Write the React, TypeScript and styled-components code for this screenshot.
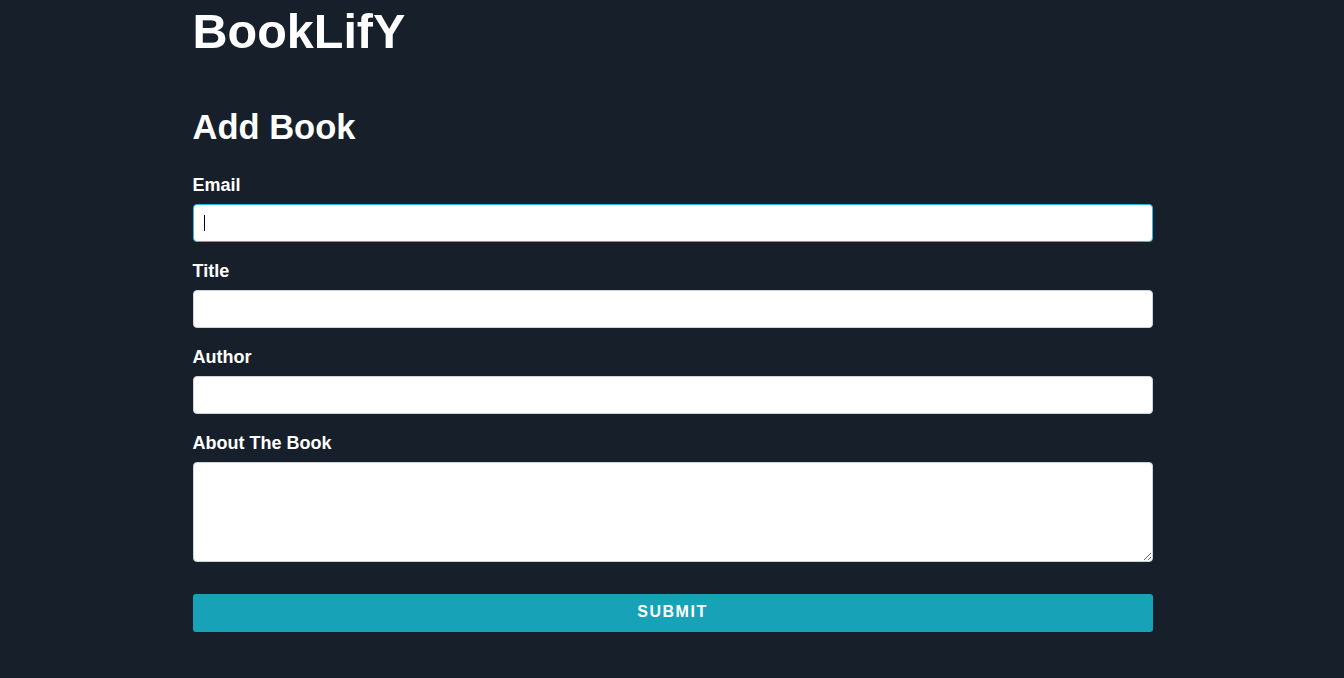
import styled, { createGlobalStyle } from 'styled-components';

const GlobalStyle = createGlobalStyle`
  html, body {
    margin: 0;
    padding: 0;
    background: #17202a;
  }
  body {
    font-family: "Liberation Sans", Arial, sans-serif;
    color: #ffffff;
  }
`;

type Field = {
  label: string;
  multiline?: boolean;
  focused?: boolean;
};

const fields: Field[] = [
  { label: 'Email', focused: true },
  { label: 'Title' },
  { label: 'Author' },
  { label: 'About The Book', multiline: true },
];

export default function App() {
  return (
    <>
      <GlobalStyle />
      <Page>
        <Brand>BookLifY</Brand>
        <Heading>Add Book</Heading>
        <Form onSubmit={(e) => e.preventDefault()}>
          {fields.map((f) => (
            <FieldGroup key={f.label}>
              <Label>{f.label}</Label>
              {f.multiline ? (
                <TextArea />
              ) : (
                <InputWrap>
                  <Input $focused={f.focused} />
                  {f.focused && <Caret />}
                </InputWrap>
              )}
            </FieldGroup>
          ))}
          <SubmitButton type="submit">Submit</SubmitButton>
        </Form>
      </Page>
    </>
  );
}

// ============================
//  Styled Components
// ============================

const Page = styled.div`
  width: 960px;
  margin: 0 auto;
  padding: 3px 0 46px 1px;
  display: flex;
  flex-direction: column;
`;

const Brand = styled.h1`
  margin: 0;
  font-size: 48.5px;
  line-height: 56px;
  font-weight: 700;
`;

const Heading = styled.h2`
  margin: 48px 0 0;
  font-size: 34.5px;
  line-height: 40px;
  font-weight: 700;
`;

const Form = styled.form`
  margin-top: 27px;
  display: flex;
  flex-direction: column;
`;

const FieldGroup = styled.div`
  display: flex;
  flex-direction: column;
  gap: 8px;
  margin-bottom: 18px;

  &:nth-last-of-type(1) {
    margin-bottom: 32px;
  }
`;

const Label = styled.label`
  font-size: 18px;
  line-height: 22px;
  font-weight: 700;
`;

const InputWrap = styled.div`
  position: relative;
  display: flex;
`;

const Input = styled.input<{ $focused?: boolean }>`
  box-sizing: border-box;
  width: 100%;
  height: 38px;
  padding: 0 10px;
  border-radius: 4px;
  border: 1px solid ${({ $focused }) => ($focused ? '#2bb7ea' : '#ced4da')};
  background: #ffffff;
  font-family: "Liberation Sans", Arial, sans-serif;
  font-size: 16px;
  outline: none;
`;

const Caret = styled.span`
  position: absolute;
  left: 11px;
  top: 11px;
  width: 1px;
  height: 16px;
  background: #000000;
`;

const TextArea = styled.textarea`
  box-sizing: border-box;
  width: 100%;
  height: 100px;
  padding: 8px 10px;
  border-radius: 4px;
  border: 1px solid #ced4da;
  background: #ffffff;
  font-family: "Liberation Sans", Arial, sans-serif;
  font-size: 16px;
  outline: none;
  display: block;
`;

const SubmitButton = styled.button`
  height: 38px;
  width: 100%;
  padding: 0 0 3px;
  border: none;
  border-radius: 3px;
  background: #17a2b8;
  color: #ffffff;
  font-family: "Liberation Sans", Arial, sans-serif;
  font-size: 16px;
  font-weight: 700;
  letter-spacing: 1.5px;
  text-transform: uppercase;
  cursor: pointer;
`;
